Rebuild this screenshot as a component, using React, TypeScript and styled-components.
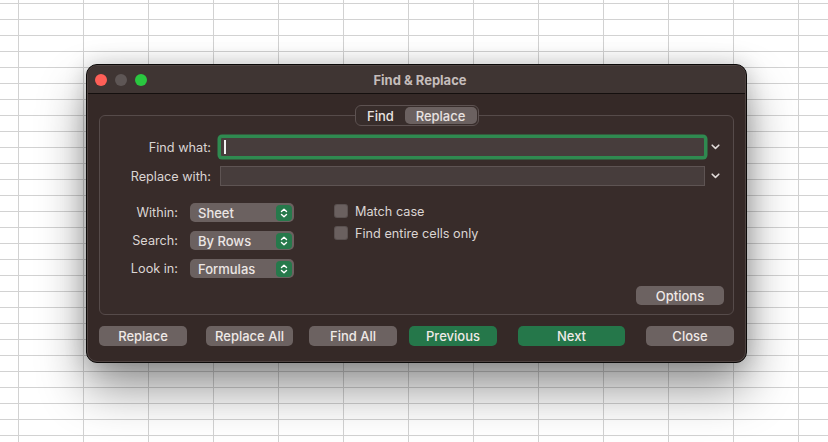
import React from "react";
import styled, { createGlobalStyle } from "styled-components";

const GlobalStyle = createGlobalStyle`
  html, body {
    margin: 0;
    padding: 0;
  }
  body {
    width: 828px;
    height: 442px;
    overflow: hidden;
    background-color: #ffffff;
    background-image:
      linear-gradient(to right, #d2d2d2 1px, transparent 1px),
      linear-gradient(to bottom, #d2d2d2 1px, transparent 1px);
    background-size: 65px 16px;
    background-position: 18px 3px;
    font-family: Inter, "Helvetica Neue", "Liberation Sans", sans-serif;
    -webkit-font-smoothing: antialiased;
  }
`;

const Page = styled.div`
  padding: 64px 0 0 86px;
`;

const Window = styled.div`
  box-sizing: border-box;
  width: 661px;
  height: 299px;
  border: 1px solid #0b0908;
  border-radius: 11px;
  background: #352927;
  box-shadow: 0 26px 48px rgba(0, 0, 0, 0.42), 0 0 22px rgba(0, 0, 0, 0.18);
`;

const Frame = styled.div`
  box-sizing: border-box;
  height: 100%;
  border: 1px solid rgba(255, 255, 255, 0.13);
  border-radius: 10px;
  overflow: hidden;
  display: flex;
  flex-direction: column;
`;

const TitleBar = styled.div`
  display: grid;
  grid-template-columns: 1fr auto 1fr;
  align-items: center;
  height: 27px;
  padding-left: 7px;
  background: #3f3533;
  border-bottom: 1px solid #140f0e;
`;

const Lights = styled.div`
  display: flex;
  gap: 8px;
`;

const Light = styled.span<{ $color: string }>`
  width: 12px;
  height: 12px;
  border-radius: 50%;
  background: ${(p) => p.$color};
`;

const Title = styled.span`
  font-size: 13px;
  font-weight: 700;
  color: #c5bdbb;
`;

const Body = styled.div`
  display: flex;
  flex-direction: column;
  padding: 11px 11px 0 11px;
`;

const Tabs = styled.div`
  position: relative;
  z-index: 1;
  align-self: center;
  display: flex;
  height: 21px;
  box-sizing: border-box;
  margin-bottom: -11px;
  border: 1px solid #5d5251;
  border-radius: 6px;
  background: #382d2b;
  padding: 1px;
`;

const Tab = styled.span<{ $active?: boolean; $width: number }>`
  display: flex;
  align-items: center;
  justify-content: center;
  width: ${(p) => p.$width}px;
  border-radius: 5px;
  font-size: 13px;
  font-weight: 500;
  color: #e8e2e0;
  background: ${(p) => (p.$active ? "#6b6160" : "transparent")};
`;

const GroupBox = styled.div`
  box-sizing: border-box;
  height: 200px;
  display: flex;
  flex-direction: column;
  padding-top: 21px;
  border: 1px solid #564b4a;
  border-radius: 6px;
  background: rgba(255, 255, 255, 0.015);
`;

const Fields = styled.div`
  display: grid;
  grid-template-columns: 111px 485px auto;
  grid-auto-rows: 20px;
  column-gap: 9px;
  row-gap: 9px;
  align-items: center;
`;

const Label = styled.span`
  text-align: right;
  font-size: 12.7px;
  color: #dbd5d3;
  white-space: nowrap;
`;

const TextField = styled.div<{ $focused?: boolean }>`
  box-sizing: border-box;
  height: 20px;
  display: flex;
  align-items: center;
  background: #473d3c;
  border: 1px solid ${(p) => (p.$focused ? "#2f8a50" : "#5e5453")};
  box-shadow: ${(p) => (p.$focused ? "0 0 0 2.5px #2f8a50" : "none")};
  border-radius: ${(p) => (p.$focused ? "2px" : "0")};
`;

const Caret = styled.span`
  width: 1.5px;
  height: 14px;
  margin-left: 3px;
  background: #f2f2f2;
`;

const Chevron = styled.svg`
  width: 9px;
  height: 6px;
  margin-left: -3px;
`;

const Options = styled.div`
  display: flex;
  margin-top: 17px;
`;

const Selects = styled.div`
  display: grid;
  grid-template-columns: 78px 104px;
  grid-auto-rows: 19px;
  column-gap: 12px;
  row-gap: 9px;
  align-items: center;
`;

const Popup = styled.div`
  display: flex;
  align-items: center;
  justify-content: space-between;
  height: 19px;
  padding: 0 2px 0 8px;
  border-radius: 5px;
  background: #6b6160;
  font-size: 13px;
  font-weight: 500;
  color: #ece6e4;
`;

const Stepper = styled.span`
  display: flex;
  width: 16px;
  height: 16px;
  border-radius: 4px;
  background: #26794b;
`;

const Checks = styled.div`
  display: flex;
  flex-direction: column;
  gap: 8px;
  margin-left: 40px;
  padding-top: 1px;
`;

const CheckRow = styled.label`
  display: flex;
  align-items: center;
  gap: 7px;
  height: 14px;
  font-size: 12.7px;
  color: #dbd5d3;
`;

const Box = styled.span`
  box-sizing: border-box;
  width: 14px;
  height: 14px;
  border-radius: 3px;
  background: #6a605f;
  border: 1px solid rgba(0, 0, 0, 0.15);
`;

const Button = styled.button<{ $primary?: boolean; $width: number; $gapBefore?: number }>`
  box-sizing: border-box;
  width: ${(p) => p.$width}px;
  height: 20px;
  margin: 0 0 0 ${(p) => p.$gapBefore ?? 0}px;
  padding: 0;
  border: none;
  border-radius: 5px;
  background: ${(p) => (p.$primary ? "#25774a" : "#6c6261")};
  color: #efe9e7;
  font-family: inherit;
  font-size: 13px;
  font-weight: 500;
`;

const OptionsButton = styled(Button)`
  align-self: flex-end;
  height: 19px;
  margin: auto 9px 9px 0;
`;

const Footer = styled.div`
  display: flex;
  margin-top: 11px;
`;

function DropChevron() {
  return (
    <Chevron viewBox="0 0 9 6">
      <path d="M1.2 1.2 L4.5 4.4 L7.8 1.2" fill="none" stroke="#e2dcda" strokeWidth="1.6" strokeLinecap="round" strokeLinejoin="round" />
    </Chevron>
  );
}

function PopupButton({ value }: { value: string }) {
  return (
    <Popup>
      {value}
      <Stepper>
        <svg width="16" height="16" viewBox="0 0 16 16">
          <path d="M5.5 6.6 L8 4.3 L10.5 6.6 M5.5 9.4 L8 11.7 L10.5 9.4" fill="none" stroke="#ffffff" strokeWidth="1.4" strokeLinecap="round" strokeLinejoin="round" />
        </svg>
      </Stepper>
    </Popup>
  );
}

export default function App() {
  return (
    <Page>
      <GlobalStyle />
      <Window>
        <Frame>
          <TitleBar>
            <Lights>
              <Light $color="#fe5f57" />
              <Light $color="#5e5655" />
              <Light $color="#2ac740" />
            </Lights>
            <Title>Find &amp; Replace</Title>
            <span />
          </TitleBar>
          <Body>
            <Tabs>
              <Tab $width={48}>Find</Tab>
              <Tab $width={72} $active>
                Replace
              </Tab>
            </Tabs>
            <GroupBox>
              <Fields>
                <Label>Find what:</Label>
                <TextField $focused>
                  <Caret />
                </TextField>
                <DropChevron />
                <Label>Replace with:</Label>
                <TextField />
                <DropChevron />
              </Fields>
              <Options>
                <Selects>
                  <Label>Within:</Label>
                  <PopupButton value="Sheet" />
                  <Label>Search:</Label>
                  <PopupButton value="By Rows" />
                  <Label>Look in:</Label>
                  <PopupButton value="Formulas" />
                </Selects>
                <Checks>
                  <CheckRow>
                    <Box />
                    Match case
                  </CheckRow>
                  <CheckRow>
                    <Box />
                    Find entire cells only
                  </CheckRow>
                </Checks>
              </Options>
              <OptionsButton $width={88}>Options</OptionsButton>
            </GroupBox>
            <Footer>
              <Button $width={88}>Replace</Button>
              <Button $width={87} $gapBefore={19}>Replace All</Button>
              <Button $width={88} $gapBefore={16}>Find All</Button>
              <Button $width={88} $gapBefore={12} $primary>Previous</Button>
              <Button $width={107} $gapBefore={21} $primary>Next</Button>
              <Button $width={88} $gapBefore={21}>Close</Button>
            </Footer>
          </Body>
        </Frame>
      </Window>
    </Page>
  );
}
